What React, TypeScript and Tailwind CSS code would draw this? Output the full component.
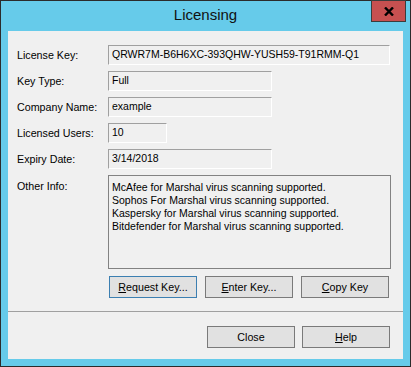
const font = { fontFamily: '"Liberation Sans", Arial, sans-serif' }

function Field({ label, value, width }: { label: string; value: string; width: string }) {
  return (
    <div className="flex items-center h-[20px]">
      <div className="w-[91px] text-[10.7px] text-black">{label}</div>
      <div
        className={`${width} h-[20px] flex items-center pl-[3px] text-[10.5px] text-black border border-t-[#a0a0a0] border-l-[#a0a0a0] border-b-white border-r-white`}
      >
        {value}
      </div>
    </div>
  )
}

function Button({ children, focused }: { children: React.ReactNode; focused?: boolean }) {
  return (
    <div
      className={`w-[88px] h-[22px] flex items-center justify-center bg-[#e1e1e1] text-[10.7px] text-black border ${
        focused ? 'border-[#3c7fb1]' : 'border-[#7a7a7a]'
      }`}
    >
      {children}
    </div>
  )
}

export default function App() {
  return (
    <div style={font} className="w-[411px] h-[367px] border border-[#2b2b2b] bg-[#66cbea] flex flex-col">
      {/* title bar */}
      <div className="relative h-[30px] flex items-center justify-center">
        <span className="text-[15px] text-[#111] -mt-[1px]">Licensing</span>
        <div className="absolute top-[-1px] right-[4px] w-[35px] h-[22px] bg-[#c75050] border border-[#3c3c3c] flex items-center justify-center">
          <svg width="10" height="9" viewBox="0 0 10 9">
            <path d="M1 0.5 L9 8.5 M9 0.5 L1 8.5" stroke="#000" strokeWidth="2.4" />
          </svg>
        </div>
      </div>

      {/* client area */}
      <div className="mx-[7px] h-[328px] bg-[#f0f0f0] flex flex-col">
        <div className="pl-[9px] pt-[14px] flex flex-col gap-[6px]">
          <Field label="License Key:" value="QRWR7M-B6H6XC-393QHW-YUSH59-T91RMM-Q1" width="w-[282px]" />
          <Field label="Key Type:" value="Full" width="w-[164px]" />
          <Field label="Company Name:" value="example" width="w-[164px]" />
          <Field label="Licensed Users:" value="10" width="w-[59px]" />
          <Field label="Expiry Date:" value="3/14/2018" width="w-[164px]" />
          <div className="flex items-start">
            <div className="w-[91px] pt-[5px] text-[10.7px] leading-[13px] text-black">Other Info:</div>
            <div className="w-[283px] h-[94px] border border-[#828282] pl-[3px] pt-[5px] text-[10.5px] leading-[13px] text-black">
              <div>McAfee for Marshal virus scanning supported.</div>
              <div>Sophos For Marshal virus scanning supported.</div>
              <div>Kaspersky for Marshal virus scanning supported.</div>
              <div>Bitdefender for Marshal virus scanning supported.</div>
            </div>
          </div>
        </div>

        <div className="mt-[7px] ml-[101px] flex gap-[8px]">
          <Button focused>
            <span><u>R</u>equest Key...</span>
          </Button>
          <Button>
            <span><u>E</u>nter Key...</span>
          </Button>
          <Button>
            <span><u>C</u>opy Key</span>
          </Button>
        </div>

        <div className="mt-[13px] h-[1px] bg-[#a0a0a0]" />

        <div className="mt-[14px] ml-[199px] flex gap-[7px]">
          <Button>Close</Button>
          <Button>
            <span><u>H</u>elp</span>
          </Button>
        </div>
      </div>
    </div>
  )
}
